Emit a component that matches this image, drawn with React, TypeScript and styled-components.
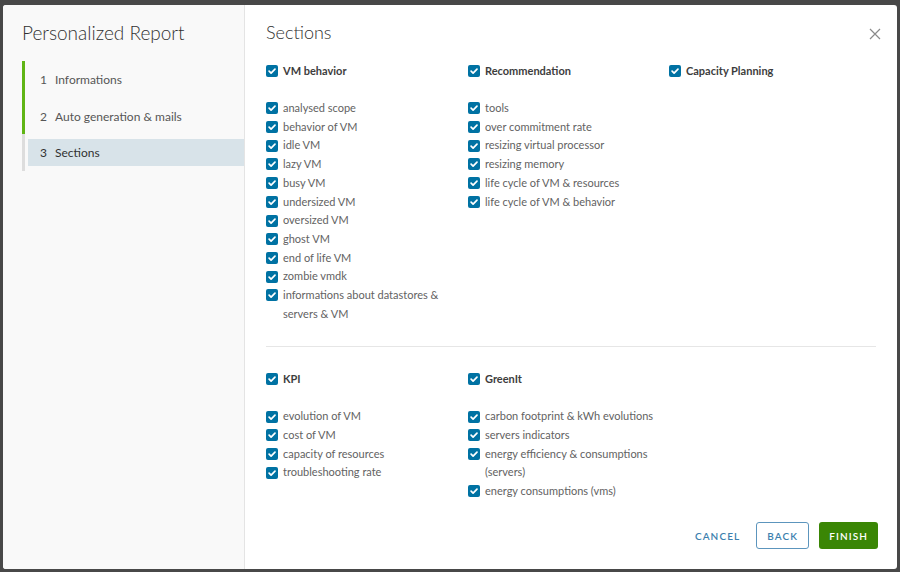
import React, { useState } from "react";
import styled, { createGlobalStyle } from "styled-components";

type Group = { title: string; items: string[] };

const TOP_GROUPS: Group[] = [
  {
    title: "VM behavior",
    items: [
      "analysed scope",
      "behavior of VM",
      "idle VM",
      "lazy VM",
      "busy VM",
      "undersized VM",
      "oversized VM",
      "ghost VM",
      "end of life VM",
      "zombie vmdk",
      "informations about datastores & servers & VM",
    ],
  },
  {
    title: "Recommendation",
    items: [
      "tools",
      "over commitment rate",
      "resizing virtual processor",
      "resizing memory",
      "life cycle of VM & resources",
      "life cycle of VM & behavior",
    ],
  },
  { title: "Capacity Planning", items: [] },
];

const BOTTOM_GROUPS: Group[] = [
  {
    title: "KPI",
    items: [
      "evolution of VM",
      "cost of VM",
      "capacity of resources",
      "troubleshooting rate",
    ],
  },
  {
    title: "GreenIt",
    items: [
      "carbon footprint & kWh evolutions",
      "servers indicators",
      "energy efficiency & consumptions (servers)",
      "energy consumptions (vms)",
    ],
  },
];

const STEPS = ["Informations", "Auto generation & mails", "Sections"];

const Check = ({ checked, onToggle }: { checked: boolean; onToggle: () => void }) => (
  <StBox $checked={checked} onClick={onToggle}>
    {checked ? (
      <svg width="12" height="12" viewBox="0 0 12 12">
        <path
          d="M3.1 6.1 L5.1 8.1 L9 4.1"
          fill="none"
          stroke="#fff"
          strokeWidth="1.7"
          strokeLinecap="round"
          strokeLinejoin="round"
        />
      </svg>
    ) : null}
  </StBox>
);

const CheckRow = ({ label, head }: { label: string; head?: boolean }) => {
  const [checked, setChecked] = useState(true);
  return (
    <StCheckRow>
      <Check checked={checked} onToggle={() => setChecked(!checked)} />
      <StLabel $head={head}>{label}</StLabel>
    </StCheckRow>
  );
};

const GroupBlock = ({ groups }: { groups: Group[] }) => (
  <StGroupGrid>
    {groups.map((g) => (
      <StColumn key={g.title}>
        <CheckRow label={g.title} head />
        {g.items.length > 0 && <StSpacer />}
        {g.items.map((it) => (
          <CheckRow key={it} label={it} />
        ))}
      </StColumn>
    ))}
  </StGroupGrid>
);

const App = () => {
  const current = 2;
  return (
    <>
      <GlobalStyle />
      <StBackdrop>
        <StModal>
          <StSidebar>
            <StSideTitle>Personalized Report</StSideTitle>
            <StSteps>
              {STEPS.map((s, idx) => (
                <StStep key={s} $done={idx < current}>
                  <StStepBody $active={idx === current}>
                    <StStepNum>{idx + 1}</StStepNum>
                    {s}
                  </StStepBody>
                </StStep>
              ))}
            </StSteps>
          </StSidebar>
          <StMain>
            <StHeader>
              <StTitle>Sections</StTitle>
              <StClose aria-label="close">
                <svg width="12" height="12" viewBox="0 0 12 12">
                  <path d="M1 1 L11 11 M11 1 L1 11" stroke="#8a8a8a" strokeWidth="1.2" />
                </svg>
              </StClose>
            </StHeader>
            <StTopSection>
              <GroupBlock groups={TOP_GROUPS} />
            </StTopSection>
            <StBottomSection>
              <GroupBlock groups={BOTTOM_GROUPS} />
            </StBottomSection>
            <StFooter>
              <StFlatBtn>Cancel</StFlatBtn>
              <StOutlineBtn>Back</StOutlineBtn>
              <StSuccessBtn>Finish</StSuccessBtn>
            </StFooter>
          </StMain>
        </StModal>
      </StBackdrop>
    </>
  );
};

export default App;

const GlobalStyle = createGlobalStyle`
  body {
    margin: 0;
    background: #484848;
    font-family: Lato, "Open Sans", sans-serif;
  }
  * { box-sizing: border-box; }
`;

const StBackdrop = styled.div`
  width: 900px;
  height: 572px;
  padding: 5px 3px 3px 3px;
  background: #484848;
`;

const StModal = styled.div`
  display: flex;
  width: 894px;
  height: 564px;
  background: #fff;
  border-radius: 3px;
  overflow: hidden;
`;

const StSidebar = styled.div`
  width: 242px;
  flex-shrink: 0;
  background: #f9f9f9;
  border-right: 1px solid #e4e4e4;
  padding: 15px 0 0 19px;
`;

const StSideTitle = styled.h2`
  margin: 0;
  font-size: 19px;
  line-height: 26px;
  font-weight: 300;
  color: #313131;
`;

const StSteps = styled.div`
  margin-top: 15px;
  display: flex;
  flex-direction: column;
`;

const StStep = styled.div<{ $done: boolean }>`
  height: 36.7px;
  display: flex;
  align-items: center;
  border-left: 3px solid ${(p) => (p.$done ? "#60b515" : "#dddddd")};
  padding-left: 3px;
`;

const StStepBody = styled.div<{ $active: boolean }>`
  flex: 1;
  height: 27px;
  display: flex;
  align-items: center;
  padding-left: 12px;
  font-size: 12px;
  color: ${(p) => (p.$active ? "#313131" : "#565656")};
  background: ${(p) => (p.$active ? "#d8e3e9" : "transparent")};
`;

const StStepNum = styled.span`
  width: 15px;
`;

const StMain = styled.div`
  flex: 1;
  display: flex;
  flex-direction: column;
  padding: 14px 19px 20px 21px;
`;

const StHeader = styled.div`
  display: flex;
  justify-content: space-between;
  align-items: center;
`;

const StTitle = styled.h3`
  margin: 0;
  font-size: 18px;
  line-height: 26px;
  font-weight: 300;
  color: #313131;
`;

const StClose = styled.button`
  border: none;
  background: none;
  padding: 0;
  margin: 4px -3px 0 0;
  width: 12px;
  height: 12px;
  cursor: pointer;
  display: flex;
`;

const StTopSection = styled.div`
  margin-top: 16.6px;
  padding-bottom: 23px;
  border-bottom: 1px solid #e6e6e6;
  margin-right: 2px;
`;

const StBottomSection = styled.div`
  padding-top: 22.5px;
`;

const StGroupGrid = styled.div`
  display: grid;
  grid-template-columns: 202px 201px 1fr;
`;

const StColumn = styled.div`
  display: flex;
  flex-direction: column;
`;

const StSpacer = styled.div`
  height: 18.7px;
`;

const StCheckRow = styled.div`
  display: flex;
  align-items: flex-start;
  gap: 5px;
  line-height: 18.7px;
`;

const StBox = styled.span<{ $checked: boolean }>`
  flex-shrink: 0;
  width: 12px;
  height: 12px;
  margin-top: 3.3px;
  border-radius: 2px;
  display: flex;
  cursor: pointer;
  background: ${(p) => (p.$checked ? "#0072a3" : "#fff")};
  border: ${(p) => (p.$checked ? "none" : "1px solid #8c8c8c")};
`;

const StLabel = styled.span<{ $head?: boolean }>`
  max-width: 170px;
  font-size: 11px;
  font-weight: ${(p) => (p.$head ? 700 : 400)};
  color: ${(p) => (p.$head ? "#3d3d3d" : "#626262")};
`;

const StFooter = styled.div`
  margin-top: auto;
  display: flex;
  justify-content: flex-end;
  gap: 10px;
`;

const StBtn = styled.button`
  height: 27px;
  padding: 0 10px;
  border-radius: 3px;
  font-family: inherit;
  font-size: 10px;
  font-weight: 600;
  letter-spacing: 1.1px;
  text-transform: uppercase;
  cursor: pointer;
`;

const StFlatBtn = styled(StBtn)`
  border: none;
  background: none;
  color: #3c7fae;
  padding: 0 6px;
`;

const StOutlineBtn = styled(StBtn)`
  border: 1px solid #5c95bd;
  background: #fff;
  color: #3c7fae;
`;

const StSuccessBtn = styled(StBtn)`
  border: none;
  background: #3a8605;
  color: #fff;
`;
